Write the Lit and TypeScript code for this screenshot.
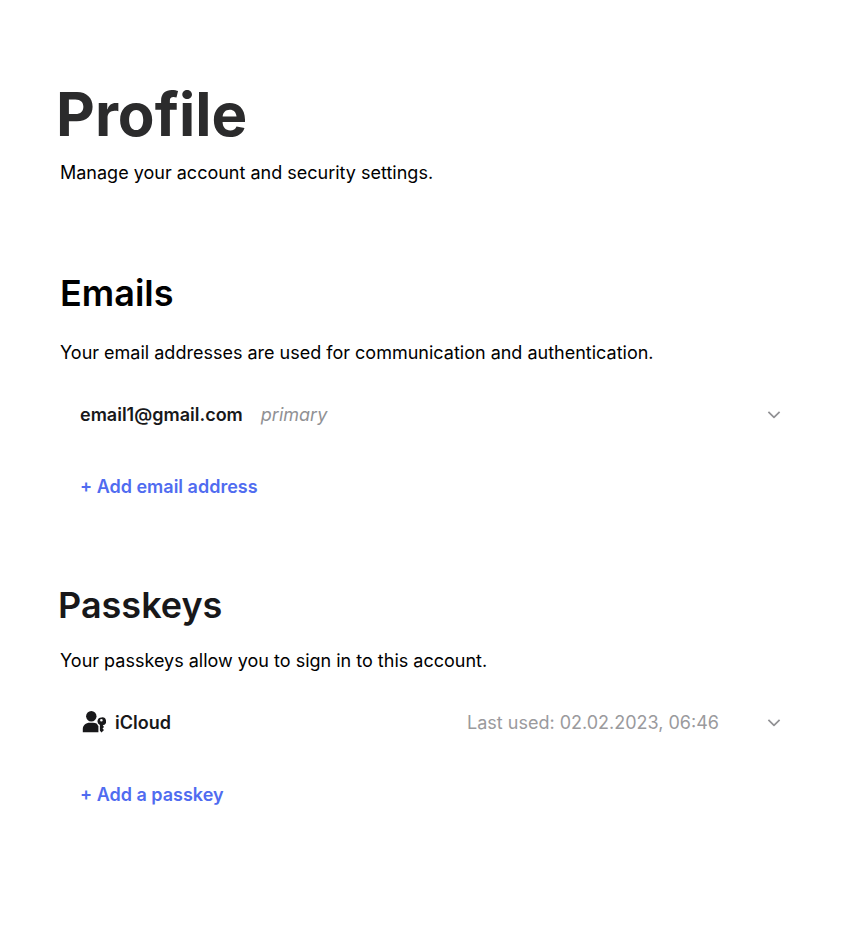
import { LitElement, html, css } from "lit";
import { customElement } from "lit/decorators.js";

const chevron = html`<svg class="chevron" viewBox="0 0 14 14" width="14" height="14" aria-hidden="true">
  <path d="M1.4 3.8 L7 9.4 L12.6 3.8" fill="none" stroke="currentColor" stroke-width="1.7" stroke-linejoin="round" />
</svg>`;

@customElement("app-root")
export class AppRoot extends LitElement {
  static styles = css`
    :host {
      display: block;
      background: #fff;
      color: #000;
      font-family: Inter, "Liberation Sans", sans-serif;
      font-size: 18px;
      line-height: 28px;
    }
    main { padding: 76px 60px 100px; }
    h1, h2, p { margin: 0; }
    h1 { font-size: 60px; line-height: 76px; font-weight: 700; color: #2b2b2c; margin-left: -4px; }
    header { padding-bottom: 2px; }
    .intro { margin-top: 7px; }
    section { margin-top: 80px; }
    h2 { font-size: 36px; line-height: 48px; font-weight: 600; margin-bottom: 22px; }
    .passkeys h2 { color: #18181a; margin-left: -2px; margin-bottom: 18px; }
    .row {
      display: flex;
      align-items: center;
      width: 100%;
      margin-top: 24px;
      padding: 10px 19px 10px 20px;
      box-sizing: border-box;
      border: 0;
      background: none;
      color: #18181a;
      font: inherit;
      text-align: left;
    }
    .name { font-weight: 600; }
    .tag { margin-left: 18px; font-style: italic; color: #919194; }
    .meta { margin-left: auto; color: #9a9a9d; }
    .chevron { margin-left: auto; color: #919194; }
    .meta + .chevron { margin-left: 48px; }
    .key { margin: 0 9px 0 2px; }
    .add {
      display: block;
      margin: 34px 0 0 20px;
      padding: 0;
      border: 0;
      background: none;
      color: #506cf0;
      font: inherit;
      font-weight: 600;
    }
  `;

  render() {
    return html`<main>
      <header>
        <h1>Profile</h1>
        <p class="intro">Manage your account and security settings.</p>
      </header>
      <section>
        <h2>Emails</h2>
        <p>Your email addresses are used for communication and authentication.</p>
        <button class="row" type="button" aria-expanded="false">
          <span class="name">email1@gmail.com</span>
          <span class="tag">primary</span>
          ${chevron}
        </button>
        <button class="add" type="button">+ Add email address</button>
      </section>
      <section class="passkeys">
        <h2>Passkeys</h2>
        <p>Your passkeys allow you to sign in to this account.</p>
        <button class="row" type="button" aria-expanded="false">
          <svg class="key" viewBox="0 0 24 24" width="24" height="24" fill="currentColor" aria-hidden="true">
            <circle cx="9.3" cy="5.2" r="5.2" />
            <path d="M.8 21.300v-3c0-4.200 3-6.600 7-6.600h3c1.600 0 3 .3 4.200 1 .3 1 .8 1.800 1.400 2.400v6.200z" />
            <path fill-rule="evenodd" d="M19.400 6.400a3.900 3.900 0 0 0-1.500 7.500v5.900l1.600 1.600 2.500-2.500-1.500-1.500 1.500-1.500-1.200-1.600A3.900 3.900 0 0 0 19.400 6.400zm0 1.500a1.300 1.300 0 1 1 0 2.600 1.300 1.300 0 0 1 0-2.600z" />
          </svg>
          <span class="name">iCloud</span>
          <span class="meta">Last used: 02.02.2023, 06:46</span>
          ${chevron}
        </button>
        <button class="add" type="button">+ Add a passkey</button>
      </section>
    </main>`;
  }
}
